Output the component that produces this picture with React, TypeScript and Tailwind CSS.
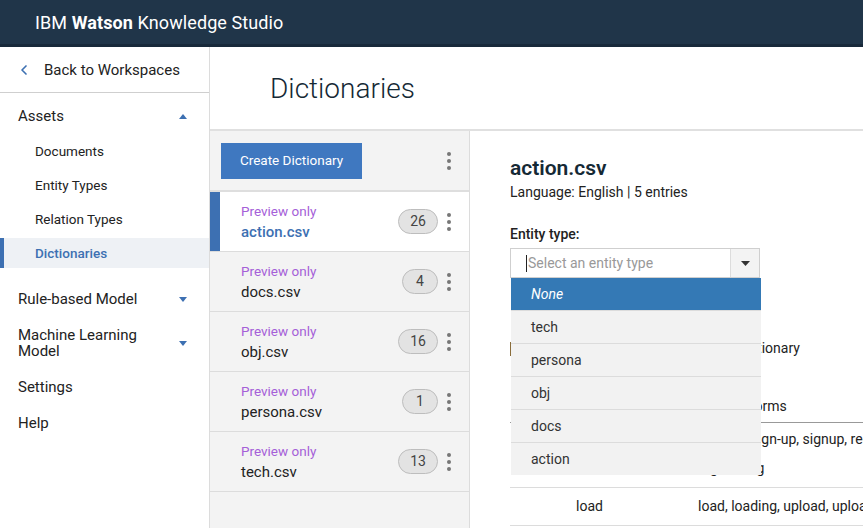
import { ChevronLeft } from "lucide-react";

const font = { fontFamily: "Roboto, 'Noto Sans', sans-serif" };

function Caret({ up = false }: { up?: boolean }) {
    return (
        <svg width="8" height="5" viewBox="0 0 8 5" className="fill-[#3d70b2]">
            {up ? <path d="M0 5 L4 0 L8 5 Z" /> : <path d="M0 0 L8 0 L4 5 Z" />}
        </svg>
    );
}

function Kebab() {
    return (
        <div className="flex flex-col gap-[3px] items-center w-[4px]">
            <span className="w-[4px] h-[4px] rounded-full bg-[#777]" />
            <span className="w-[4px] h-[4px] rounded-full bg-[#777]" />
            <span className="w-[4px] h-[4px] rounded-full bg-[#777]" />
        </div>
    );
}

const dictionaries = [
    { name: "action.csv", count: 26 },
    { name: "docs.csv", count: 4 },
    { name: "obj.csv", count: 16 },
    { name: "persona.csv", count: 1 },
    { name: "tech.csv", count: 13 },
];

const entityTypes = ["tech", "persona", "obj", "docs", "action"];

export default function App() {
    return (
        <div style={font} className="w-[863px] h-[528px] overflow-hidden flex flex-col bg-white text-[#222]">
            {/* Header */}
            <div className="h-[47px] shrink-0 bg-[#203549] border-b-[3px] border-[#18293a] flex items-center pl-[35px]">
                <span className="text-white text-[18px] tracking-[0.1px] mt-px">
                    IBM <span className="font-bold">Watson</span> Knowledge Studio
                </span>
            </div>

            <div className="flex flex-1 min-h-0">
                {/* Sidebar */}
                <div className="w-[210px] shrink-0 border-r border-[#dcdcdc] flex flex-col">
                    <div className="h-[46px] border-b border-[#cfcfcf] flex items-center pl-[16px] gap-[12px]">
                        <ChevronLeft size={16} strokeWidth={2.5} className="text-[#3d70b2]" />
                        <span className="text-[15px] mt-[2px]">Back to Workspaces</span>
                    </div>

                    <div className="flex items-center justify-between pl-[18px] pr-[22px] h-[30px] mt-[8px]">
                        <span className="text-[15px]">Assets</span>
                        <Caret up />
                    </div>
                    <div className="flex flex-col gap-[4px] mt-[5px]">
                        <div className="h-[30px] flex items-center pl-[35px] text-[13.5px]">Documents</div>
                        <div className="h-[30px] flex items-center pl-[35px] text-[13.5px]">Entity Types</div>
                        <div className="h-[30px] flex items-center pl-[35px] text-[13.5px]">Relation Types</div>
                        <div className="h-[30px] flex items-center pl-[31px] text-[13.5px] bg-[#eef1f5] border-l-4 border-[#3d70b2] text-[#3d70b2] font-medium">
                            Dictionaries
                        </div>
                    </div>

                    <div className="flex items-center justify-between pl-[18px] pr-[22px] h-[30px] mt-[16px]">
                        <span className="text-[15px]">Rule-based Model</span>
                        <Caret />
                    </div>
                    <div className="flex items-center justify-between pl-[18px] pr-[22px] mt-[13px]">
                        <span className="text-[15px] leading-[16px]">
                            Machine Learning
                            <br />
                            Model
                        </span>
                        <Caret />
                    </div>
                    <div className="flex items-center pl-[18px] h-[30px] mt-[13px] text-[15px]">Settings</div>
                    <div className="flex items-center pl-[18px] h-[30px] mt-[6px] text-[15px]">Help</div>
                </div>

                {/* Main */}
                <div className="flex-1 flex flex-col min-w-0">
                    <div className="h-[84px] shrink-0 border-b-2 border-[#e0e0e0] flex items-center pl-[60px]">
                        <h1 className="text-[28px] font-light text-[#152935] mt-[2px]">Dictionaries</h1>
                    </div>

                    <div className="flex flex-1 min-h-0">
                        {/* Dictionary list */}
                        <div className="w-[260px] shrink-0 bg-[#f3f3f3] border-r border-[#dcdcdc] flex flex-col">
                            <div className="h-[61px] shrink-0 flex items-center justify-between pl-[11px] pr-[18px] border-b-2 border-[#dedede]">
                                <button className="bg-[#3f78c0] text-white text-[13.5px] w-[141px] h-[36px]">
                                    Create Dictionary
                                </button>
                                <Kebab />
                            </div>
                            {dictionaries.map((d, i) => {
                                const selected = i === 0;
                                return (
                                    <div
                                        key={d.name}
                                        className={`h-[60px] flex items-center border-b border-[#dcdcdc] pr-[18px] ${selected ? "bg-white" : ""}`}
                                    >
                                        <div className={`w-[10px] self-stretch ${selected ? "bg-[#3d70b2]" : ""}`} />
                                        <div className="flex-1 pl-[21px] flex flex-col">
                                            <span className="text-[13.5px] text-[#a560d8] leading-[20px]">Preview only</span>
                                            <span className={`text-[15px] leading-[22px] ${selected ? "text-[#3d70b2] font-medium" : "text-[#222]"}`}>
                                                {d.name}
                                            </span>
                                        </div>
                                        <div className="h-[25px] min-w-[36px] px-[11px] rounded-full bg-[#e3e3e3] border border-[#bdbdbd] flex items-center justify-center text-[14px] text-[#444]">
                                            {d.count}
                                        </div>
                                        <div className="ml-[9px]">
                                            <Kebab />
                                        </div>
                                    </div>
                                );
                            })}
                        </div>

                        {/* Detail */}
                        <div className="flex-1 pl-[40px] pt-[24px] flex flex-col min-w-0">
                            <h2 className="text-[21px] font-semibold text-[#152935] leading-[26px]">action.csv</h2>
                            <p className="text-[14px] mt-[1px]">Language: English | 5 entries</p>

                            <p className="text-[14px] font-medium mt-[21px]">Entity type:</p>
                            <div className="relative w-[250px] mt-[3px]">
                                <div className="h-[30px] border border-[#cfcfcf] flex">
                                    <div className="flex-1 flex items-center pl-[15px] text-[14px] text-[#999]">
                                        <span className="w-px h-[17px] bg-[#222] mr-px" />
                                        Select an entity type
                                    </div>
                                    <div className="w-[29px] bg-[#f3f3f3] border-l border-[#dcdcdc] flex items-center justify-center">
                                        <svg width="9" height="5" viewBox="0 0 9 5">
                                            <path d="M0 0 L9 0 L4.5 5 Z" fill="#333" />
                                        </svg>
                                    </div>
                                </div>

                                {/* Open menu */}
                                <div className="absolute left-px top-[30px] w-[250px] z-10 bg-[#f2f2f2]">
                                    <div className="h-[32px] bg-[#3479b5] text-white italic text-[14px] flex items-center pl-[20px]">
                                        None
                                    </div>
                                    {entityTypes.map((t) => (
                                        <div key={t} className="h-[33px] border-t border-[#dcdcdc] flex items-center pl-[20px] text-[14px] text-[#333]">
                                            {t}
                                        </div>
                                    ))}
                                </div>
                            </div>

                            <div className="flex items-center mt-[60px]">
                                <span className="w-[14px] h-[14px] border border-[#8a6d3b]" />
                                <span className="text-[14px] whitespace-nowrap ml-[23px]">Enable fuzzy matching for this dictionary</span>
                            </div>

                            {/* Entries table */}
                            <div className="mt-[32px] w-[460px] text-[14px]">
                                <div className="flex h-[32px] items-center border-b border-[#999]">
                                    <div className="w-[66px]" />
                                    <div className="w-[122px]">Lemma</div>
                                    <div className="flex-1 whitespace-nowrap">Surface forms</div>
                                </div>
                                <div className="flex h-[65px] border-b border-[#dcdcdc]">
                                    <div className="w-[66px]" />
                                    <div className="w-[122px] pt-[8px]">register</div>
                                    <div className="flex-1 whitespace-nowrap leading-[29px] pt-[2px]">
                                        register, sign-up, signup, registration,
                                        <br />
                                        registering
                                    </div>
                                </div>
                                <div className="flex h-[38px] items-center border-b border-[#dcdcdc]">
                                    <div className="w-[66px]" />
                                    <div className="w-[122px]">load</div>
                                    <div className="flex-1 whitespace-nowrap">load, loading, upload, uploading</div>
                                </div>
                            </div>
                        </div>
                    </div>
                </div>
            </div>
        </div>
    );
}
